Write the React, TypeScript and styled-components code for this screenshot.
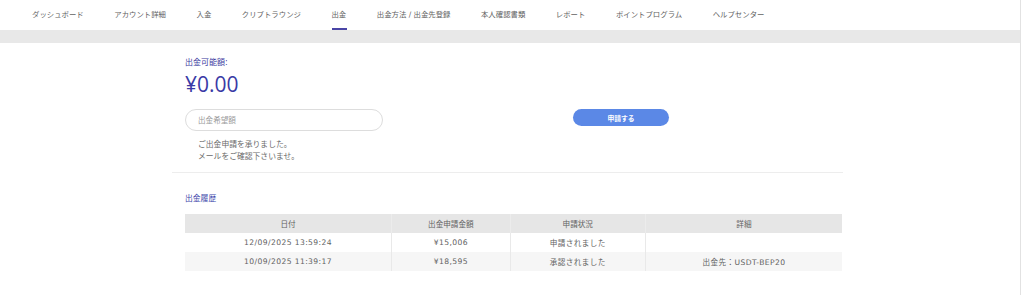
import styled, { createGlobalStyle } from "styled-components";

const GlobalStyle = createGlobalStyle`
    body {
        margin: 0;
        background: #ffffff;
        font-family: "DejaVu Sans", "Noto Sans CJK JP", sans-serif;
        color: #555555;
    }
`;

const Page = styled.div`
    width: 1020px;
    min-height: 295px;
    border-right: 1px solid #e2e2e2;
    background: #ffffff;
`;

const Nav = styled.nav`
    height: 30px;
    display: flex;
    gap: 30.5px;
    padding-left: 32px;
`;

const NavItem = styled.div<{ $active?: boolean }>`
    position: relative;
    height: 30px;
    padding-bottom: 4px;
    box-sizing: border-box;
    display: flex;
    align-items: center;
    font-size: 7.4px;
    color: #626262;
    white-space: nowrap;
    &::after {
        content: "";
        display: ${(p) => (p.$active ? "block" : "none")};
        position: absolute;
        left: 1px;
        right: -1px;
        bottom: 0;
        height: 2px;
        background: #4a45a6;
    }
`;

const Band = styled.div`
    height: 13px;
    background: #e8e8e8;
`;

const Content = styled.div`
    margin-left: 172px;
    width: 671px;
    padding-top: 14px;
`;

const Inner = styled.div`
    padding-left: 13px;
`;

const Label = styled.div`
    font-size: 8px;
    line-height: 12px;
    color: #3b3ba0;
`;

const Amount = styled.div`
    margin-top: 5px;
    font-family: "Open Sans", sans-serif;
    font-size: 21px;
    line-height: 21px;
    color: #3a3aa6;
`;

const FormRow = styled.div`
    margin-top: 14px;
    display: flex;
    align-items: flex-start;
    gap: 190px;
`;

const AmountInput = styled.input`
    width: 198px;
    height: 22px;
    box-sizing: border-box;
    border: 1px solid #dddddd;
    border-radius: 11px;
    padding: 0 12px;
    font-family: "DejaVu Sans", "Noto Sans CJK JP", sans-serif;
    font-size: 7.6px;
    color: #555555;
    outline: none;
    &::placeholder {
        color: #9a9a9a;
    }
`;

const SubmitButton = styled.button`
    width: 96px;
    height: 17px;
    border: none;
    border-radius: 9px;
    background: #5b88e6;
    color: #ffffff;
    font-family: "DejaVu Sans", "Noto Sans CJK JP", sans-serif;
    font-size: 6.8px;
    font-weight: bold;
    padding: 0;
`;

const Message = styled.div`
    margin-top: 8px;
    padding-left: 13px;
    font-size: 7.8px;
    line-height: 12px;
    color: #6a6a6a;
`;

const Divider = styled.hr`
    margin: 9px 0 0 0;
    border: none;
    border-top: 1px solid #ededed;
`;

const SectionTitle = styled.div`
    margin-top: 20px;
    font-size: 7.8px;
    line-height: 12px;
    color: #3d45aa;
`;

const Table = styled.table`
    margin-top: 9px;
    width: 657px;
    border-collapse: collapse;
    font-size: 7.6px;
    color: #626262;
    text-align: center;
`;

const Th = styled.th<{ $w: number }>`
    width: ${(p) => p.$w}px;
    height: 19px;
    padding: 0;
    font-weight: normal;
    background: #e6e6e6;
    border-left: 1px solid #ececec;
    &:first-child {
        border-left: none;
    }
`;

const Row = styled.tr<{ $shaded?: boolean }>`
    background: ${(p) => (p.$shaded ? "#f6f6f6" : "#ffffff")};
`;

const Td = styled.td`
    height: 19px;
    padding: 0;
    letter-spacing: 0.4px;
    border-left: 1px solid #e9e9e9;
    &:first-child {
        border-left: none;
    }
`;

const navItems = [
    "ダッシュボード",
    "アカウント詳細",
    "入金",
    "クリプトラウンジ",
    "出金",
    "出金方法 / 出金先登録",
    "本人確認書類",
    "レポート",
    "ポイントプログラム",
    "ヘルプセンター",
];

const history = [
    { date: "12/09/2025 13:59:24", amount: "¥15,006", status: "申請されました", detail: "" },
    { date: "10/09/2025 11:39:17", amount: "¥18,595", status: "承認されました", detail: "出金先：USDT-BEP20" },
];

const App = () => {
    return (
        <Page>
            <GlobalStyle />
            <Nav>
                {navItems.map((item) => (
                    <NavItem key={item} $active={item === "出金"}>
                        {item}
                    </NavItem>
                ))}
            </Nav>
            <Band />
            <Content>
                <Inner>
                    <Label>出金可能額:</Label>
                    <Amount>¥0.00</Amount>
                    <FormRow>
                        <AmountInput placeholder="出金希望額" />
                        <SubmitButton>申請する</SubmitButton>
                    </FormRow>
                    <Message>
                        ご出金申請を承りました。
                        <br />
                        メールをご確認下さいませ。
                    </Message>
                </Inner>
                <Divider />
                <Inner>
                    <SectionTitle>出金履歴</SectionTitle>
                    <Table>
                        <thead>
                            <tr>
                                <Th $w={207}>日付</Th>
                                <Th $w={118}>出金申請金額</Th>
                                <Th $w={135}>申請状況</Th>
                                <Th $w={197}>詳細</Th>
                            </tr>
                        </thead>
                        <tbody>
                            {history.map((h, i) => (
                                <Row key={h.date} $shaded={i % 2 === 1}>
                                    <Td>{h.date}</Td>
                                    <Td>{h.amount}</Td>
                                    <Td>{h.status}</Td>
                                    <Td>{h.detail}</Td>
                                </Row>
                            ))}
                        </tbody>
                    </Table>
                </Inner>
            </Content>
        </Page>
    );
};

export default App;
